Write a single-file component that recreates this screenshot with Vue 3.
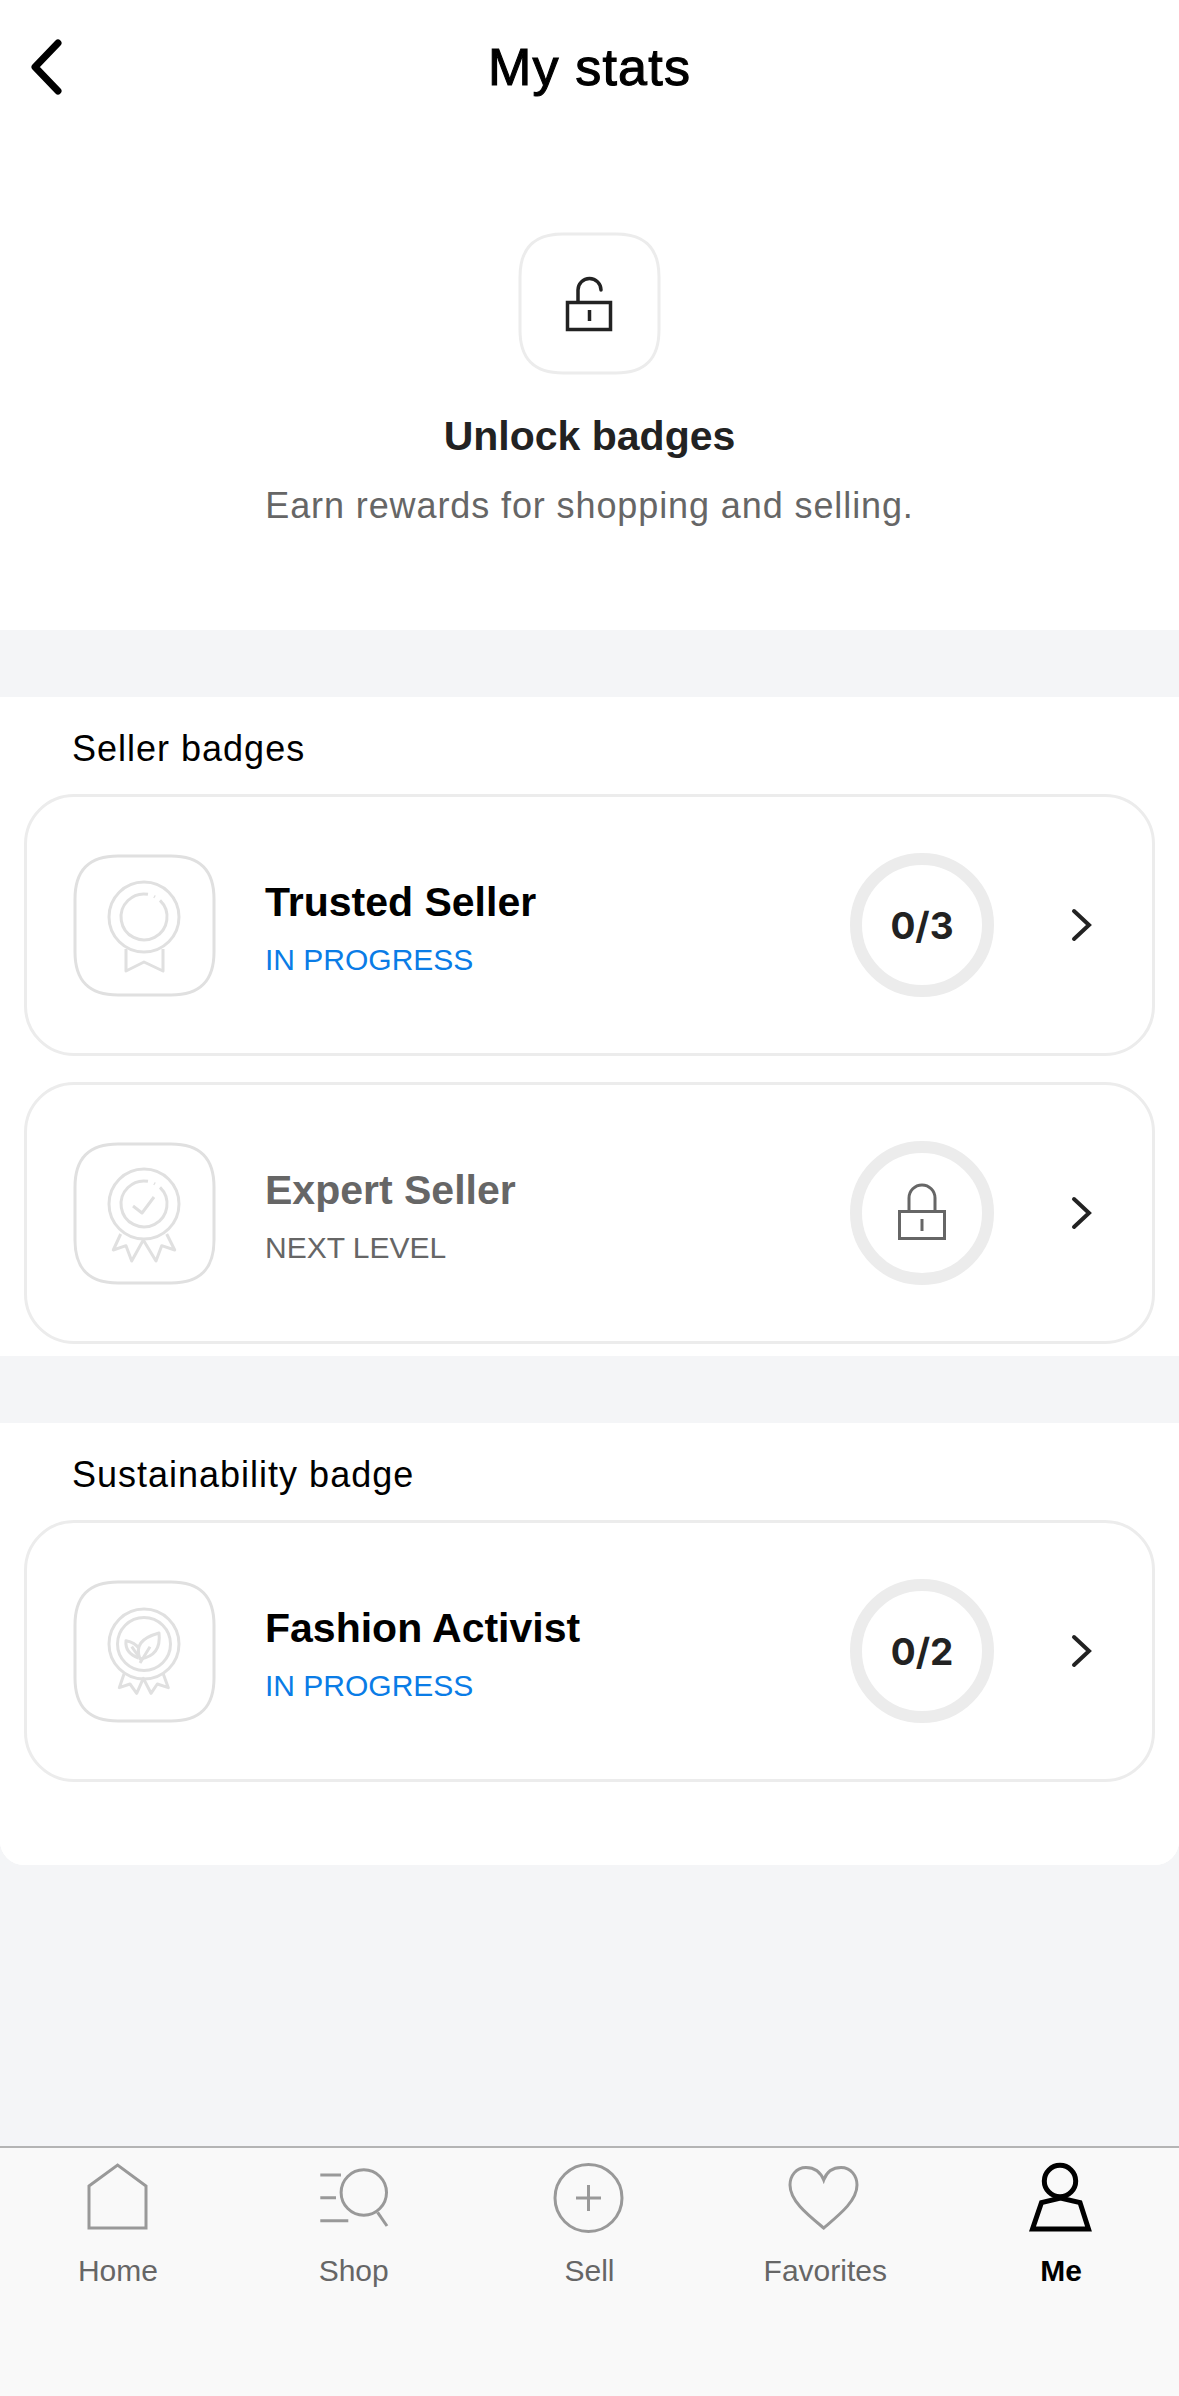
<script setup>
// badge rows per section
const sections = [
  {
    title: 'Seller badges',
    badges: [
      { name: 'Trusted Seller', status: 'IN PROGRESS', icon: 'trusted', count: '0/3' },
      { name: 'Expert Seller', status: 'NEXT LEVEL', icon: 'expert', locked: true },
    ],
  },
  {
    title: 'Sustainability badge',
    badges: [{ name: 'Fashion Activist', status: 'IN PROGRESS', icon: 'activist', count: '0/2' }],
  },
]

const tabs = [
  { label: 'Home', icon: 'home' },
  { label: 'Shop', icon: 'shop' },
  { label: 'Sell', icon: 'sell' },
  { label: 'Favorites', icon: 'heart' },
  { label: 'Me', icon: 'me', active: true },
]

const tilePath = 'M45 2H98C127 2 141 16 141 45V98C141 127 127 141 98 141H45C16 141 2 127 2 98V45C2 16 16 2 45 2Z'
</script>

<template>
  <div class="page">
    <div class="sheet">
      <header class="topbar">
        <svg class="back" width="40" height="64" viewBox="0 0 40 64">
          <path d="M35 8L12 32L35 56" />
        </svg>
        <h1>My stats</h1>
      </header>

      <section class="hero">
        <svg class="tile" width="143" height="143" viewBox="0 0 143 143">
          <path :d="tilePath" class="tile-hero" />
          <g class="lock-dark">
            <rect x="49.5" y="70.5" width="43" height="27" />
            <path d="M60 69V58a11.5 11.5 0 0 1 23 0" stroke-linecap="round" />
            <path d="M71.5 78V89" />
          </g>
        </svg>
        <h2>Unlock badges</h2>
        <p>Earn rewards for shopping and selling.</p>
      </section>

      <template v-for="(section, i) in sections" :key="section.title">
        <div class="divider"></div>
        <section class="group" :class="{ last: i === sections.length - 1 }">
          <h3>{{ section.title }}</h3>
          <div class="cards">
            <div v-for="badge in section.badges" :key="badge.name" class="card">
              <svg class="tile" width="143" height="143" viewBox="0 0 143 143">
                <path :d="tilePath" class="tile-badge" />
                <g v-if="badge.icon === 'trusted'" class="medal">
                  <circle cx="71" cy="63" r="35" />
                  <path d="M75 40.3A23 23 0 1 0 87 46.4" />
                  <path d="M81 42.4L82 43" />
                  <path d="M53 95V117L71 108L90 117V95" />
                </g>
                <g v-else-if="badge.icon === 'expert'" class="medal">
                  <circle cx="71" cy="62" r="35" />
                  <path d="M75 39.3A23 23 0 1 0 87 45.4" />
                  <path d="M81 41.4L82 42" />
                  <path d="M60 64L69 71L81 55" />
                  <path d="M47.7 92L40.3 108L53 103.7L58.7 119L70.3 98L83 119L88.7 103.7L101.7 108L93.7 92" />
                </g>
                <g v-else class="medal">
                  <circle cx="71" cy="64" r="35" />
                  <circle cx="71" cy="64" r="26.5" />
                  <path d="M67 79C62 66 68 58 86 53C88 70 80 77 67 79Z" />
                  <path d="M65.5 78C57 75 52 70 53 60.7C59 62 63 64 65.5 68" />
                  <path d="M67 83L77 66.7M58.7 66.7L66 77" />
                  <path d="M51 94L46.3 107.7L57 104L63.7 113.3L70.3 98.3L78 113.3L84.3 104L95.3 107.7L90.3 94" />
                </g>
              </svg>

              <div class="info" :class="{ muted: badge.locked }">
                <div class="name">{{ badge.name }}</div>
                <div class="status">{{ badge.status }}</div>
              </div>

              <div class="ring">
                <svg v-if="badge.locked" width="120" height="120" viewBox="12 12 120 120">
                  <g class="lock-grey">
                    <rect x="49.5" y="70.5" width="45" height="27" />
                    <path d="M59 70V57a13 13 0 0 1 26 0V70" />
                    <path d="M72 78V90" />
                  </g>
                </svg>
                <span v-else>{{ badge.count }}</span>
              </div>

              <svg class="chev" width="24" height="36" viewBox="0 0 24 36">
                <path d="M4 4L19 18L4 32" />
              </svg>
            </div>
          </div>
        </section>
      </template>
    </div>

    <nav class="tabs">
      <div v-for="tab in tabs" :key="tab.label" class="tab" :class="{ active: tab.active }">
        <svg width="100" height="80" viewBox="0 0 100 80">
          <path v-if="tab.icon === 'home'" d="M21 31L49.6 10L78 31V73H21Z" />
          <g v-else-if="tab.icon === 'shop'">
            <path d="M16.3 20H37M16.3 42.7H32M16.3 65.7H44.3" />
            <circle cx="59.8" cy="37.5" r="22.7" />
            <path d="M73.6 57.3L83 71" />
          </g>
          <g v-else-if="tab.icon === 'sell'">
            <circle cx="49.5" cy="43" r="33.5" />
            <path d="M37 43H62M49.5 30V56" />
          </g>
          <path
            v-else-if="tab.icon === 'heart'"
            d="M48.7 25C45 16 38 12.5 31 12.5C21 12.5 15 21 15 30C15 46 33 60 48.7 73C64 60 82 46 82 30C82 21 76 12.5 66 12.5C59 12.5 52 16 48.7 25Z"
          />
          <g v-else>
            <circle cx="49" cy="26" r="15.7" />
            <path d="M21.5 74H77.5L69 47.5L49.5 43L30.5 47.5Z" />
          </g>
        </svg>
        <span>{{ tab.label }}</span>
      </div>
    </nav>
  </div>
</template>

<style>
html,
body {
  margin: 0;
  background: #f4f5f7;
}
</style>

<style scoped>
.page {
  width: 1179px;
  height: 2396px;
  display: flex;
  flex-direction: column;
  background: #f4f5f7;
  font-family: "Liberation Sans", Arial, sans-serif;
  overflow: hidden;
}

.sheet {
  background: #fff;
  border-radius: 0 0 24px 24px;
  height: 1865px;
}

.topbar {
  height: 134px;
  display: flex;
  align-items: center;
  justify-content: center;
  position: relative;
}

.topbar h1 {
  margin: 0;
  font-size: 52px;
  letter-spacing: 1.2px;
  font-weight: 400;
  color: #000;
  -webkit-text-stroke: 1.1px #000;
}

.back {
  position: absolute;
  left: 23px;
  top: 35px;
}

.back path {
  fill: none;
  stroke: #000;
  stroke-width: 7;
  stroke-linecap: round;
  stroke-linejoin: round;
}

.hero {
  height: 496px;
  box-sizing: border-box;
  padding-top: 98px;
  display: flex;
  flex-direction: column;
  align-items: center;
}

.hero h2 {
  margin: 38px 0 0;
  font-size: 41px;
  line-height: 46px;
  color: #222;
}

.hero p {
  margin: 27px 0 0;
  font-size: 36px;
  line-height: 40px;
  letter-spacing: 0.9px;
  color: #666;
}

.tile {
  flex: none;
  display: block;
}

.tile-hero {
  fill: none;
  stroke: #ececec;
  stroke-width: 3;
}

.tile-badge {
  fill: none;
  stroke: #e0e0e0;
  stroke-width: 3;
}

.lock-dark {
  fill: none;
  stroke: #222;
  stroke-width: 3.5;
}

.lock-grey {
  fill: none;
  stroke: #666;
  stroke-width: 3;
}

.medal {
  fill: none;
  stroke: #e0e0e0;
  stroke-width: 3;
  stroke-linejoin: round;
}

.divider {
  height: 67px;
  background: #f4f5f7;
}

.group {
  padding: 0 24px 12px;
  background: #fff;
}

.group.last {
  padding-bottom: 83px;
  border-radius: 0 0 24px 24px;
}

.group h3 {
  margin: 0;
  padding: 32px 0 25px 48px;
  font-size: 36px;
  line-height: 40px;
  letter-spacing: 1px;
  font-weight: 400;
  color: #000;
}

.cards {
  display: flex;
  flex-direction: column;
  gap: 26px;
}

.card {
  height: 262px;
  box-sizing: border-box;
  border: 3px solid #ececec;
  border-radius: 50px;
  padding: 0 0 0 46px;
  display: flex;
  align-items: center;
}

.info {
  flex: 1;
  margin-left: 49px;
  padding-top: 6px;
}

.name {
  font-size: 41px;
  line-height: 48px;
  font-weight: 700;
  color: #000;
}

.status {
  margin-top: 16px;
  font-size: 30px;
  line-height: 36px;
  color: #0a7ce6;
}

.muted .name,
.muted .status {
  color: #666;
}

.ring {
  flex: none;
  width: 144px;
  height: 144px;
  box-sizing: border-box;
  border: 12px solid #ececec;
  border-radius: 50%;
  display: flex;
  align-items: center;
  justify-content: center;
  font-family: Inter, "Liberation Sans", sans-serif;
  font-size: 37px;
  font-weight: 700;
  color: #222;
}

.chev {
  flex: none;
  margin-left: 76px;
  margin-right: 58px;
}

.chev path {
  fill: none;
  stroke: #222;
  stroke-width: 4;
  stroke-linecap: round;
}

.tabs {
  margin-top: auto;
  height: 250px;
  box-sizing: border-box;
  border-top: 2px solid #b4b4b4;
  background: #f9f9f9;
  display: grid;
  grid-template-columns: repeat(5, 1fr);
}

.tab {
  display: flex;
  flex-direction: column;
  align-items: center;
  padding-top: 7px;
  font-size: 30px;
  line-height: 36px;
  color: #666;
}

.tab svg {
  display: block;
  fill: none;
  stroke: #999;
  stroke-width: 3;
  margin-bottom: 18px;
}

.tab.active {
  color: #000;
  font-weight: 700;
}

.tab.active svg {
  stroke: #000;
  stroke-width: 5;
}
</style>
